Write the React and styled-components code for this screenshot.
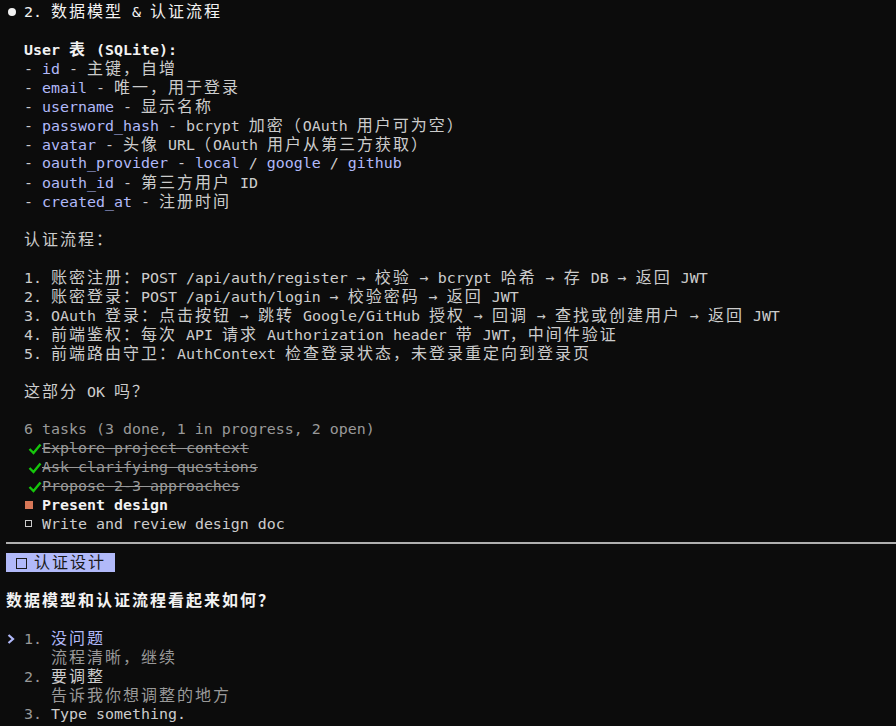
import React from 'react';
import styled, { createGlobalStyle } from 'styled-components';

const tones = {
    fg: '#cccccc',
    white: '#f2f2f2',
    dim: '#999999',
    accent: '#b1b9f9',
};

const GlobalStyle = createGlobalStyle`
    html, body {
        margin: 0;
        background: #0c0c0c;
    }
`;

const Screen = styled.div`
    width: 896px;
    height: 726px;
    overflow: hidden;
    box-sizing: border-box;
    padding: 1.5px 6px 0;
    background: #0c0c0c;
    font-family: "DejaVu Sans Mono", "Noto Sans CJK SC", monospace;
    font-size: 14.95px;
`;

const Line = styled.div`
    height: 19px;
    line-height: 19px;
    white-space: pre;
    color: ${props => tones[props.$tone || 'fg']};
    font-weight: ${props => props.$bold ? 700 : 400};
`;

const Wide = styled.span`
    font-family: "Noto Sans CJK SC", sans-serif;
    font-size: 16px;
    line-height: 1;
    letter-spacing: 2px;
`;

const Tone = styled.span`
    color: ${props => tones[props.$tone || 'fg']};
    text-decoration: ${props => props.$struck ? 'line-through' : 'none'};
`;

const Dot = styled.span`
    display: block;
    width: 8px;
    height: 8px;
    margin: 6px 0 0 2px;
    border-radius: 50%;
    background: #f2f2f2;
`;

const Cell = styled.span`
    display: inline-block;
    width: ${props => props.$cols * 9}px;
    height: 19px;
    vertical-align: top;
`;

const CheckMark = styled.svg`
    display: block;
    margin: 4px 0 0 4px;
`;

const Square = styled.span`
    display: block;
    box-sizing: border-box;
    width: ${props => props.$filled ? 8 : 7}px;
    height: ${props => props.$filled ? 8 : 7}px;
    margin: ${props => props.$filled ? '5px 0 0 1px' : '5.5px 0 0 1px'};
    background: ${props => props.$filled ? '#d77757' : 'transparent'};
    border: ${props => props.$filled ? 'none' : '1.5px solid #cccccc'};
`;

const Rule = styled.div`
    height: 19px;
    display: flex;
    align-items: center;
    margin-right: -6px;

    &::after {
        content: '';
        flex: 1;
        height: 2px;
        background: #b0b0b0;
    }
`;

const Badge = styled.span`
    display: inline-block;
    height: 19px;
    vertical-align: top;
    padding-left: 9px;
    background: #b1b9f9;
    color: #1a1a1a;
`;

const BadgeBox = styled.span`
    display: inline-block;
    box-sizing: border-box;
    width: 11px;
    height: 11px;
    margin: 0 7px 0 1px;
    border: 1.5px solid #1a1a1a;
    vertical-align: -1px;
`;

const Pointer = styled.svg`
    display: block;
    margin: 5px 0 0 1px;
`;

const WIDE = /([\u2e80-\u9fff\uf900-\ufaff\uff00-\uffef\u3000-\u303f]+)/;

function T({ children }) {
    return String(children)
        .split(WIDE)
        .map((part, i) => (i % 2 ? <Wide key={i}>{part}</Wide> : part));
}

const fields = [
    ['id', '主键，自增'],
    ['email', '唯一，用于登录'],
    ['username', '显示名称'],
    ['password_hash', 'bcrypt 加密（OAuth 用户可为空）'],
    ['avatar', '头像 URL（OAuth 用户从第三方获取）'],
    ['oauth_provider', null],
    ['oauth_id', '第三方用户 ID'],
    ['created_at', '注册时间'],
];

const flow = [
    '1. 账密注册：POST /api/auth/register → 校验 → bcrypt 哈希 → 存 DB → 返回 JWT',
    '2. 账密登录：POST /api/auth/login → 校验密码 → 返回 JWT',
    '3. OAuth 登录：点击按钮 → 跳转 Google/GitHub 授权 → 回调 → 查找或创建用户 → 返回 JWT',
    '4. 前端鉴权：每次 API 请求 Authorization header 带 JWT，中间件验证',
    '5. 前端路由守卫：AuthContext 检查登录状态，未登录重定向到登录页',
];

const doneTasks = ['Explore project context', 'Ask clarifying questions', 'Propose 2-3 approaches'];

function FieldLine({ name, desc }) {
    return (
        <Line>
            {'  - '}
            <Tone $tone="accent">{name}</Tone>
            {' - '}
            {desc ? (
                <T>{desc}</T>
            ) : (
                <>
                    <Tone $tone="accent">local</Tone>{' / '}
                    <Tone $tone="accent">google</Tone>{' / '}
                    <Tone $tone="accent">github</Tone>
                </>
            )}
        </Line>
    );
}

function DoneTask({ label }) {
    return (
        <Line $tone="dim">
            {'  '}
            <Cell $cols={2}>
                <CheckMark width="14" height="12" viewBox="0 0 14 12">
                    <polyline points="1.5,6 5.5,10 12.5,1.5" fill="none" stroke="#16c60c" strokeWidth="2.4" />
                </CheckMark>
            </Cell>
            <Tone $tone="dim" $struck>{label}</Tone>
        </Line>
    );
}

function Option({ num, label, hint, active }) {
    return (
        <>
            <Line $tone="dim">
                <Cell $cols={2}>
                    {active && (
                        <Pointer width="8" height="10" viewBox="0 0 8 10">
                            <polyline points="1.5,1 6,5 1.5,9" fill="none" stroke="#b1b9f9" strokeWidth="2.2" />
                        </Pointer>
                    )}
                </Cell>
                {num}. <Tone $tone={active ? 'accent' : 'fg'}><T>{label}</T></Tone>
            </Line>
            {hint && (
                <Line $tone="dim">
                    {'     '}<T>{hint}</T>
                </Line>
            )}
        </>
    );
}

export default function App() {
    return (
        <Screen>
            <GlobalStyle />
            <Line $tone="white">
                <Cell $cols={2}><Dot /></Cell>
                <T>2. 数据模型 & 认证流程</T>
            </Line>
            <Line />
            <Line $tone="white" $bold>{'  '}<T>User 表 (SQLite):</T></Line>
            {fields.map(([name, desc]) => (
                <FieldLine key={name} name={name} desc={desc} />
            ))}
            <Line />
            <Line>{'  '}<T>认证流程：</T></Line>
            <Line />
            {flow.map(step => (
                <Line key={step}>{'  '}<T>{step}</T></Line>
            ))}
            <Line />
            <Line>{'  '}<T>这部分 OK 吗？</T></Line>
            <Line />
            <Line $tone="dim">{'  6 tasks (3 done, 1 in progress, 2 open)'}</Line>
            {doneTasks.map(label => (
                <DoneTask key={label} label={label} />
            ))}
            <Line $tone="white" $bold>
                {'  '}
                <Cell $cols={2}><Square $filled /></Cell>
                Present design
            </Line>
            <Line>
                {'  '}
                <Cell $cols={2}><Square /></Cell>
                Write and review design doc
            </Line>
            <Rule />
            <Line>
                <Badge><BadgeBox /><T>认证设计</T>{' '}</Badge>
            </Line>
            <Line />
            <Line $tone="white" $bold><T>数据模型和认证流程看起来如何？</T></Line>
            <Line />
            <Option num={1} label="没问题" hint="流程清晰，继续" active />
            <Option num={2} label="要调整" hint="告诉我你想调整的地方" />
            <Option num={3} label="Type something." />
        </Screen>
    );
}
